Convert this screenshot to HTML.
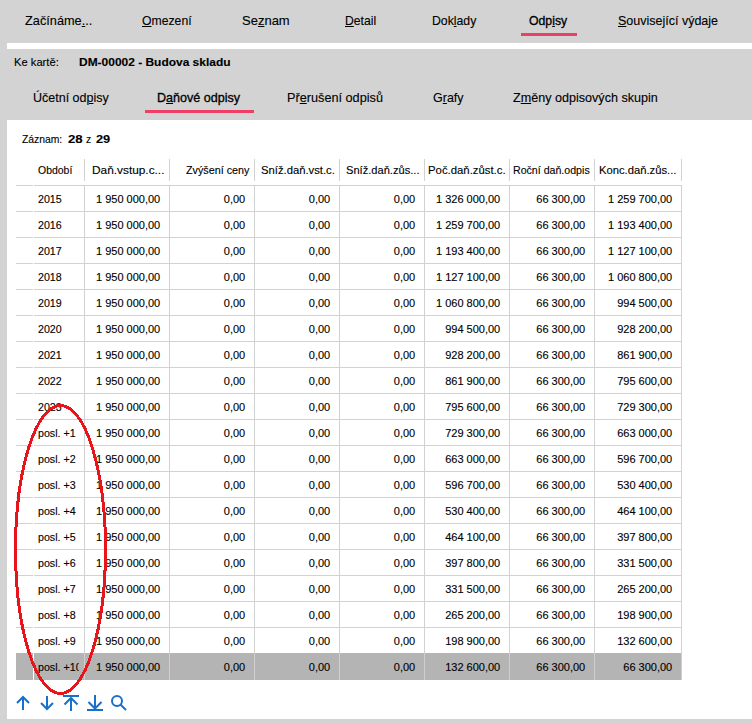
<!DOCTYPE html>
<html><head><meta charset="utf-8"><style>
html,body{margin:0;padding:0;}
body{width:752px;height:724px;position:relative;overflow:hidden;background:#d3d3d3;font-family:"Liberation Sans",sans-serif;color:#000;}
.t{position:absolute;white-space:pre;transform-origin:0 0;-webkit-text-stroke:0.12px #000;}
u{text-decoration:underline;text-decoration-thickness:1px;text-underline-offset:1px;}
#root{position:absolute;left:0;top:0;width:752px;height:724px;}
</style></head><body>
<div style="position:absolute;left:7px;top:43px;width:745px;height:6px;background:#fff"></div>
<div style="position:absolute;left:7px;top:120px;width:745px;height:599px;background:#fff"></div>
<div style="position:absolute;left:521px;top:33px;width:56px;height:3px;background:#f03f66"></div>
<div style="position:absolute;left:145px;top:110px;width:109px;height:3px;background:#f03f66"></div>
<div style="position:absolute;left:84px;top:159px;width:1px;height:22px;background:#d2d2d2"></div>
<div style="position:absolute;left:169px;top:159px;width:1px;height:22px;background:#d2d2d2"></div>
<div style="position:absolute;left:254px;top:159px;width:1px;height:22px;background:#d2d2d2"></div>
<div style="position:absolute;left:339px;top:159px;width:1px;height:22px;background:#d2d2d2"></div>
<div style="position:absolute;left:424px;top:159px;width:1px;height:22px;background:#d2d2d2"></div>
<div style="position:absolute;left:509px;top:159px;width:1px;height:22px;background:#d2d2d2"></div>
<div style="position:absolute;left:594px;top:159px;width:1px;height:22px;background:#d2d2d2"></div>
<div style="position:absolute;left:681px;top:159px;width:1px;height:22px;background:#d2d2d2"></div>
<div style="position:absolute;left:16px;top:185px;width:666px;height:1px;background:#d2d2d2"></div>
<div style="position:absolute;left:16px;top:211px;width:666px;height:1px;background:#d2d2d2"></div>
<div style="position:absolute;left:16px;top:237px;width:666px;height:1px;background:#d2d2d2"></div>
<div style="position:absolute;left:16px;top:263px;width:666px;height:1px;background:#d2d2d2"></div>
<div style="position:absolute;left:16px;top:289px;width:666px;height:1px;background:#d2d2d2"></div>
<div style="position:absolute;left:16px;top:315px;width:666px;height:1px;background:#d2d2d2"></div>
<div style="position:absolute;left:16px;top:341px;width:666px;height:1px;background:#d2d2d2"></div>
<div style="position:absolute;left:16px;top:367px;width:666px;height:1px;background:#d2d2d2"></div>
<div style="position:absolute;left:16px;top:393px;width:666px;height:1px;background:#d2d2d2"></div>
<div style="position:absolute;left:16px;top:419px;width:666px;height:1px;background:#d2d2d2"></div>
<div style="position:absolute;left:16px;top:445px;width:666px;height:1px;background:#d2d2d2"></div>
<div style="position:absolute;left:16px;top:471px;width:666px;height:1px;background:#d2d2d2"></div>
<div style="position:absolute;left:16px;top:497px;width:666px;height:1px;background:#d2d2d2"></div>
<div style="position:absolute;left:16px;top:523px;width:666px;height:1px;background:#d2d2d2"></div>
<div style="position:absolute;left:16px;top:549px;width:666px;height:1px;background:#d2d2d2"></div>
<div style="position:absolute;left:16px;top:575px;width:666px;height:1px;background:#d2d2d2"></div>
<div style="position:absolute;left:16px;top:601px;width:666px;height:1px;background:#d2d2d2"></div>
<div style="position:absolute;left:16px;top:627px;width:666px;height:1px;background:#d2d2d2"></div>
<div style="position:absolute;left:16px;top:653px;width:666px;height:1px;background:#d2d2d2"></div>
<div style="position:absolute;left:16px;top:653px;width:666px;height:27px;background:#b4b4b4"></div>
<div style="position:absolute;left:84px;top:186px;width:1px;height:467px;background:#d2d2d2"></div>
<div style="position:absolute;left:84px;top:653px;width:1px;height:27px;background:#cfcfcf"></div>
<div style="position:absolute;left:169px;top:186px;width:1px;height:467px;background:#d2d2d2"></div>
<div style="position:absolute;left:169px;top:653px;width:1px;height:27px;background:#cfcfcf"></div>
<div style="position:absolute;left:254px;top:186px;width:1px;height:467px;background:#d2d2d2"></div>
<div style="position:absolute;left:254px;top:653px;width:1px;height:27px;background:#cfcfcf"></div>
<div style="position:absolute;left:339px;top:186px;width:1px;height:467px;background:#d2d2d2"></div>
<div style="position:absolute;left:339px;top:653px;width:1px;height:27px;background:#cfcfcf"></div>
<div style="position:absolute;left:424px;top:186px;width:1px;height:467px;background:#d2d2d2"></div>
<div style="position:absolute;left:424px;top:653px;width:1px;height:27px;background:#cfcfcf"></div>
<div style="position:absolute;left:509px;top:186px;width:1px;height:467px;background:#d2d2d2"></div>
<div style="position:absolute;left:509px;top:653px;width:1px;height:27px;background:#cfcfcf"></div>
<div style="position:absolute;left:594px;top:186px;width:1px;height:467px;background:#d2d2d2"></div>
<div style="position:absolute;left:594px;top:653px;width:1px;height:27px;background:#cfcfcf"></div>
<div style="position:absolute;left:681px;top:186px;width:1px;height:467px;background:#d2d2d2"></div>
<div style="position:absolute;left:681px;top:653px;width:1px;height:27px;background:#cfcfcf"></div>
<div style="position:absolute;left:33px;top:185px;width:1px;height:495px;background:#fff"></div>
<div class="t" id="t0" style="left:24.61px;top:14.00px;font-size:13px;line-height:13px;transform:scaleX(0.9806);">Začínáme<u>.</u>..</div>
<div class="t" id="t1" style="left:142.00px;top:14.00px;font-size:13px;line-height:13px;transform:scaleX(0.9396);"><u>O</u>mezení</div>
<div class="t" id="t2" style="left:242.00px;top:14.00px;font-size:13px;line-height:13px;">Se<u>z</u>nam</div>
<div class="t" id="t3" style="left:344.97px;top:14.00px;font-size:13px;line-height:13px;transform:scaleX(0.9364);"><u>D</u>etail</div>
<div class="t" id="t4" style="left:431.64px;top:14.00px;font-size:13px;line-height:13px;transform:scaleX(0.9435);">Dok<u>l</u>ady</div>
<div class="t" id="t5" style="left:529.43px;top:14.00px;font-size:13px;line-height:13px;transform:scaleX(0.9425);-webkit-text-stroke:0.32px #000;">Odp<u>i</u>sy</div>
<div class="t" id="t6" style="left:618.38px;top:14.00px;font-size:13px;line-height:13px;transform:scaleX(0.9615);"><u>S</u>ouvisející výdaje</div>
<div class="t" id="t7" style="left:13.58px;top:56.69px;font-size:11px;line-height:11px;transform:scaleX(1.0167);">Ke kartě:</div>
<div class="t" id="t8" style="left:79.32px;top:56.69px;font-size:11px;line-height:11px;font-weight:bold;transform:scaleX(1.0870);">DM-00002 - Budova skladu</div>
<div class="t" id="t9" style="left:33.04px;top:91.00px;font-size:13px;line-height:13px;transform:scaleX(0.9615);">Účetní od<u>p</u>isy</div>
<div class="t" id="t10" style="left:157.04px;top:91.00px;font-size:13px;line-height:13px;transform:scaleX(0.9647);-webkit-text-stroke:0.32px #000;">D<u>a</u>ňové odpisy</div>
<div class="t" id="t11" style="left:286.61px;top:91.00px;font-size:13px;line-height:13px;transform:scaleX(0.9763);">Př<u>e</u>rušení odpisů</div>
<div class="t" id="t12" style="left:433.04px;top:91.00px;font-size:13px;line-height:13px;transform:scaleX(0.9613);">G<u>r</u>afy</div>
<div class="t" id="t13" style="left:512.60px;top:91.00px;font-size:13px;line-height:13px;transform:scaleX(0.9678);">Z<u>m</u>ěny odpisových skupin</div>
<div class="t" id="t14" style="left:22.00px;top:133.69px;font-size:11px;line-height:11px;transform:scaleX(0.9405);">Záznam:</div>
<div class="t" id="t15" style="left:67.67px;top:133.69px;font-size:11px;line-height:11px;font-weight:bold;transform:scaleX(1.2000);">28</div>
<div class="t" id="t16" style="left:86.41px;top:133.69px;font-size:11px;line-height:11px;transform:scaleX(0.9400);">z</div>
<div class="t" id="t17" style="left:96.25px;top:133.69px;font-size:11px;line-height:11px;font-weight:bold;transform:scaleX(1.1636);">29</div>
<div class="t" id="t18" style="left:37.61px;top:164.69px;font-size:11px;line-height:11px;transform:scaleX(0.9500);">Období</div>
<div class="t" id="t19" style="left:92.32px;top:164.69px;font-size:11px;line-height:11px;transform:scaleX(1.0773);">Daň.vstup.c...</div>
<div class="t" id="t20" style="left:186.01px;top:164.69px;font-size:11px;line-height:11px;transform:scaleX(0.9797);">Zvýšení ceny</div>
<div class="t" id="t21" style="left:260.99px;top:164.69px;font-size:11px;line-height:11px;transform:scaleX(1.0239);">Sníž.daň.vst.c.</div>
<div class="t" id="t22" style="left:346.00px;top:164.69px;font-size:11px;line-height:11px;transform:scaleX(1.0097);">Sníž.daň.zůs...</div>
<div class="t" id="t23" style="left:427.76px;top:164.69px;font-size:11px;line-height:11px;transform:scaleX(1.0315);">Poč.daň.zůst.c.</div>
<div class="t" id="t24" style="left:512.62px;top:164.69px;font-size:11px;line-height:11px;transform:scaleX(0.9646);">Roční daň.odpis</div>
<div class="t" id="t25" style="left:598.78px;top:164.69px;font-size:11px;line-height:11px;transform:scaleX(1.0213);">Konc.daň.zůs...</div>
<div class="t" id="r0c0" style="left:38.20px;top:193.69px;font-size:11px;line-height:11px;transform:scaleX(0.9700);width:41.6px;overflow:hidden;">2015</div>
<div class="t" id="r0c1" style="right:591.80px;top:193.69px;font-size:11px;line-height:11px;transform-origin:100% 0;">1 950 000,00</div>
<div class="t" id="r0c2" style="right:506.80px;top:193.69px;font-size:11px;line-height:11px;transform-origin:100% 0;">0,00</div>
<div class="t" id="r0c3" style="right:421.80px;top:193.69px;font-size:11px;line-height:11px;transform-origin:100% 0;">0,00</div>
<div class="t" id="r0c4" style="right:336.80px;top:193.69px;font-size:11px;line-height:11px;transform-origin:100% 0;">0,00</div>
<div class="t" id="r0c5" style="right:251.80px;top:193.69px;font-size:11px;line-height:11px;transform-origin:100% 0;">1 326 000,00</div>
<div class="t" id="r0c6" style="right:166.80px;top:193.69px;font-size:11px;line-height:11px;transform-origin:100% 0;">66 300,00</div>
<div class="t" id="r0c7" style="right:79.80px;top:193.69px;font-size:11px;line-height:11px;transform-origin:100% 0;">1 259 700,00</div>
<div class="t" id="r1c0" style="left:38.20px;top:219.69px;font-size:11px;line-height:11px;transform:scaleX(0.9700);width:41.6px;overflow:hidden;">2016</div>
<div class="t" id="r1c1" style="right:591.80px;top:219.69px;font-size:11px;line-height:11px;transform-origin:100% 0;">1 950 000,00</div>
<div class="t" id="r1c2" style="right:506.80px;top:219.69px;font-size:11px;line-height:11px;transform-origin:100% 0;">0,00</div>
<div class="t" id="r1c3" style="right:421.80px;top:219.69px;font-size:11px;line-height:11px;transform-origin:100% 0;">0,00</div>
<div class="t" id="r1c4" style="right:336.80px;top:219.69px;font-size:11px;line-height:11px;transform-origin:100% 0;">0,00</div>
<div class="t" id="r1c5" style="right:251.80px;top:219.69px;font-size:11px;line-height:11px;transform-origin:100% 0;">1 259 700,00</div>
<div class="t" id="r1c6" style="right:166.80px;top:219.69px;font-size:11px;line-height:11px;transform-origin:100% 0;">66 300,00</div>
<div class="t" id="r1c7" style="right:79.80px;top:219.69px;font-size:11px;line-height:11px;transform-origin:100% 0;">1 193 400,00</div>
<div class="t" id="r2c0" style="left:38.20px;top:245.69px;font-size:11px;line-height:11px;transform:scaleX(0.9700);width:41.6px;overflow:hidden;">2017</div>
<div class="t" id="r2c1" style="right:591.80px;top:245.69px;font-size:11px;line-height:11px;transform-origin:100% 0;">1 950 000,00</div>
<div class="t" id="r2c2" style="right:506.80px;top:245.69px;font-size:11px;line-height:11px;transform-origin:100% 0;">0,00</div>
<div class="t" id="r2c3" style="right:421.80px;top:245.69px;font-size:11px;line-height:11px;transform-origin:100% 0;">0,00</div>
<div class="t" id="r2c4" style="right:336.80px;top:245.69px;font-size:11px;line-height:11px;transform-origin:100% 0;">0,00</div>
<div class="t" id="r2c5" style="right:251.80px;top:245.69px;font-size:11px;line-height:11px;transform-origin:100% 0;">1 193 400,00</div>
<div class="t" id="r2c6" style="right:166.80px;top:245.69px;font-size:11px;line-height:11px;transform-origin:100% 0;">66 300,00</div>
<div class="t" id="r2c7" style="right:79.80px;top:245.69px;font-size:11px;line-height:11px;transform-origin:100% 0;">1 127 100,00</div>
<div class="t" id="r3c0" style="left:38.20px;top:271.69px;font-size:11px;line-height:11px;transform:scaleX(0.9700);width:41.6px;overflow:hidden;">2018</div>
<div class="t" id="r3c1" style="right:591.80px;top:271.69px;font-size:11px;line-height:11px;transform-origin:100% 0;">1 950 000,00</div>
<div class="t" id="r3c2" style="right:506.80px;top:271.69px;font-size:11px;line-height:11px;transform-origin:100% 0;">0,00</div>
<div class="t" id="r3c3" style="right:421.80px;top:271.69px;font-size:11px;line-height:11px;transform-origin:100% 0;">0,00</div>
<div class="t" id="r3c4" style="right:336.80px;top:271.69px;font-size:11px;line-height:11px;transform-origin:100% 0;">0,00</div>
<div class="t" id="r3c5" style="right:251.80px;top:271.69px;font-size:11px;line-height:11px;transform-origin:100% 0;">1 127 100,00</div>
<div class="t" id="r3c6" style="right:166.80px;top:271.69px;font-size:11px;line-height:11px;transform-origin:100% 0;">66 300,00</div>
<div class="t" id="r3c7" style="right:79.80px;top:271.69px;font-size:11px;line-height:11px;transform-origin:100% 0;">1 060 800,00</div>
<div class="t" id="r4c0" style="left:38.20px;top:297.69px;font-size:11px;line-height:11px;transform:scaleX(0.9700);width:41.6px;overflow:hidden;">2019</div>
<div class="t" id="r4c1" style="right:591.80px;top:297.69px;font-size:11px;line-height:11px;transform-origin:100% 0;">1 950 000,00</div>
<div class="t" id="r4c2" style="right:506.80px;top:297.69px;font-size:11px;line-height:11px;transform-origin:100% 0;">0,00</div>
<div class="t" id="r4c3" style="right:421.80px;top:297.69px;font-size:11px;line-height:11px;transform-origin:100% 0;">0,00</div>
<div class="t" id="r4c4" style="right:336.80px;top:297.69px;font-size:11px;line-height:11px;transform-origin:100% 0;">0,00</div>
<div class="t" id="r4c5" style="right:251.80px;top:297.69px;font-size:11px;line-height:11px;transform-origin:100% 0;">1 060 800,00</div>
<div class="t" id="r4c6" style="right:166.80px;top:297.69px;font-size:11px;line-height:11px;transform-origin:100% 0;">66 300,00</div>
<div class="t" id="r4c7" style="right:79.80px;top:297.69px;font-size:11px;line-height:11px;transform-origin:100% 0;">994 500,00</div>
<div class="t" id="r5c0" style="left:38.20px;top:323.69px;font-size:11px;line-height:11px;transform:scaleX(0.9700);width:41.6px;overflow:hidden;">2020</div>
<div class="t" id="r5c1" style="right:591.80px;top:323.69px;font-size:11px;line-height:11px;transform-origin:100% 0;">1 950 000,00</div>
<div class="t" id="r5c2" style="right:506.80px;top:323.69px;font-size:11px;line-height:11px;transform-origin:100% 0;">0,00</div>
<div class="t" id="r5c3" style="right:421.80px;top:323.69px;font-size:11px;line-height:11px;transform-origin:100% 0;">0,00</div>
<div class="t" id="r5c4" style="right:336.80px;top:323.69px;font-size:11px;line-height:11px;transform-origin:100% 0;">0,00</div>
<div class="t" id="r5c5" style="right:251.80px;top:323.69px;font-size:11px;line-height:11px;transform-origin:100% 0;">994 500,00</div>
<div class="t" id="r5c6" style="right:166.80px;top:323.69px;font-size:11px;line-height:11px;transform-origin:100% 0;">66 300,00</div>
<div class="t" id="r5c7" style="right:79.80px;top:323.69px;font-size:11px;line-height:11px;transform-origin:100% 0;">928 200,00</div>
<div class="t" id="r6c0" style="left:38.20px;top:349.69px;font-size:11px;line-height:11px;transform:scaleX(0.9700);width:41.6px;overflow:hidden;">2021</div>
<div class="t" id="r6c1" style="right:591.80px;top:349.69px;font-size:11px;line-height:11px;transform-origin:100% 0;">1 950 000,00</div>
<div class="t" id="r6c2" style="right:506.80px;top:349.69px;font-size:11px;line-height:11px;transform-origin:100% 0;">0,00</div>
<div class="t" id="r6c3" style="right:421.80px;top:349.69px;font-size:11px;line-height:11px;transform-origin:100% 0;">0,00</div>
<div class="t" id="r6c4" style="right:336.80px;top:349.69px;font-size:11px;line-height:11px;transform-origin:100% 0;">0,00</div>
<div class="t" id="r6c5" style="right:251.80px;top:349.69px;font-size:11px;line-height:11px;transform-origin:100% 0;">928 200,00</div>
<div class="t" id="r6c6" style="right:166.80px;top:349.69px;font-size:11px;line-height:11px;transform-origin:100% 0;">66 300,00</div>
<div class="t" id="r6c7" style="right:79.80px;top:349.69px;font-size:11px;line-height:11px;transform-origin:100% 0;">861 900,00</div>
<div class="t" id="r7c0" style="left:38.20px;top:375.69px;font-size:11px;line-height:11px;transform:scaleX(0.9700);width:41.6px;overflow:hidden;">2022</div>
<div class="t" id="r7c1" style="right:591.80px;top:375.69px;font-size:11px;line-height:11px;transform-origin:100% 0;">1 950 000,00</div>
<div class="t" id="r7c2" style="right:506.80px;top:375.69px;font-size:11px;line-height:11px;transform-origin:100% 0;">0,00</div>
<div class="t" id="r7c3" style="right:421.80px;top:375.69px;font-size:11px;line-height:11px;transform-origin:100% 0;">0,00</div>
<div class="t" id="r7c4" style="right:336.80px;top:375.69px;font-size:11px;line-height:11px;transform-origin:100% 0;">0,00</div>
<div class="t" id="r7c5" style="right:251.80px;top:375.69px;font-size:11px;line-height:11px;transform-origin:100% 0;">861 900,00</div>
<div class="t" id="r7c6" style="right:166.80px;top:375.69px;font-size:11px;line-height:11px;transform-origin:100% 0;">66 300,00</div>
<div class="t" id="r7c7" style="right:79.80px;top:375.69px;font-size:11px;line-height:11px;transform-origin:100% 0;">795 600,00</div>
<div class="t" id="r8c0" style="left:38.20px;top:401.69px;font-size:11px;line-height:11px;transform:scaleX(0.9700);width:41.6px;overflow:hidden;">2023</div>
<div class="t" id="r8c1" style="right:591.80px;top:401.69px;font-size:11px;line-height:11px;transform-origin:100% 0;">1 950 000,00</div>
<div class="t" id="r8c2" style="right:506.80px;top:401.69px;font-size:11px;line-height:11px;transform-origin:100% 0;">0,00</div>
<div class="t" id="r8c3" style="right:421.80px;top:401.69px;font-size:11px;line-height:11px;transform-origin:100% 0;">0,00</div>
<div class="t" id="r8c4" style="right:336.80px;top:401.69px;font-size:11px;line-height:11px;transform-origin:100% 0;">0,00</div>
<div class="t" id="r8c5" style="right:251.80px;top:401.69px;font-size:11px;line-height:11px;transform-origin:100% 0;">795 600,00</div>
<div class="t" id="r8c6" style="right:166.80px;top:401.69px;font-size:11px;line-height:11px;transform-origin:100% 0;">66 300,00</div>
<div class="t" id="r8c7" style="right:79.80px;top:401.69px;font-size:11px;line-height:11px;transform-origin:100% 0;">729 300,00</div>
<div class="t" id="r9c0" style="left:38.20px;top:427.69px;font-size:11px;line-height:11px;transform:scaleX(0.9700);width:41.6px;overflow:hidden;">posl. +1</div>
<div class="t" id="r9c1" style="right:591.80px;top:427.69px;font-size:11px;line-height:11px;transform-origin:100% 0;">1 950 000,00</div>
<div class="t" id="r9c2" style="right:506.80px;top:427.69px;font-size:11px;line-height:11px;transform-origin:100% 0;">0,00</div>
<div class="t" id="r9c3" style="right:421.80px;top:427.69px;font-size:11px;line-height:11px;transform-origin:100% 0;">0,00</div>
<div class="t" id="r9c4" style="right:336.80px;top:427.69px;font-size:11px;line-height:11px;transform-origin:100% 0;">0,00</div>
<div class="t" id="r9c5" style="right:251.80px;top:427.69px;font-size:11px;line-height:11px;transform-origin:100% 0;">729 300,00</div>
<div class="t" id="r9c6" style="right:166.80px;top:427.69px;font-size:11px;line-height:11px;transform-origin:100% 0;">66 300,00</div>
<div class="t" id="r9c7" style="right:79.80px;top:427.69px;font-size:11px;line-height:11px;transform-origin:100% 0;">663 000,00</div>
<div class="t" id="r10c0" style="left:38.20px;top:453.69px;font-size:11px;line-height:11px;transform:scaleX(0.9700);width:41.6px;overflow:hidden;">posl. +2</div>
<div class="t" id="r10c1" style="right:591.80px;top:453.69px;font-size:11px;line-height:11px;transform-origin:100% 0;">1 950 000,00</div>
<div class="t" id="r10c2" style="right:506.80px;top:453.69px;font-size:11px;line-height:11px;transform-origin:100% 0;">0,00</div>
<div class="t" id="r10c3" style="right:421.80px;top:453.69px;font-size:11px;line-height:11px;transform-origin:100% 0;">0,00</div>
<div class="t" id="r10c4" style="right:336.80px;top:453.69px;font-size:11px;line-height:11px;transform-origin:100% 0;">0,00</div>
<div class="t" id="r10c5" style="right:251.80px;top:453.69px;font-size:11px;line-height:11px;transform-origin:100% 0;">663 000,00</div>
<div class="t" id="r10c6" style="right:166.80px;top:453.69px;font-size:11px;line-height:11px;transform-origin:100% 0;">66 300,00</div>
<div class="t" id="r10c7" style="right:79.80px;top:453.69px;font-size:11px;line-height:11px;transform-origin:100% 0;">596 700,00</div>
<div class="t" id="r11c0" style="left:38.20px;top:479.69px;font-size:11px;line-height:11px;transform:scaleX(0.9700);width:41.6px;overflow:hidden;">posl. +3</div>
<div class="t" id="r11c1" style="right:591.80px;top:479.69px;font-size:11px;line-height:11px;transform-origin:100% 0;">1 950 000,00</div>
<div class="t" id="r11c2" style="right:506.80px;top:479.69px;font-size:11px;line-height:11px;transform-origin:100% 0;">0,00</div>
<div class="t" id="r11c3" style="right:421.80px;top:479.69px;font-size:11px;line-height:11px;transform-origin:100% 0;">0,00</div>
<div class="t" id="r11c4" style="right:336.80px;top:479.69px;font-size:11px;line-height:11px;transform-origin:100% 0;">0,00</div>
<div class="t" id="r11c5" style="right:251.80px;top:479.69px;font-size:11px;line-height:11px;transform-origin:100% 0;">596 700,00</div>
<div class="t" id="r11c6" style="right:166.80px;top:479.69px;font-size:11px;line-height:11px;transform-origin:100% 0;">66 300,00</div>
<div class="t" id="r11c7" style="right:79.80px;top:479.69px;font-size:11px;line-height:11px;transform-origin:100% 0;">530 400,00</div>
<div class="t" id="r12c0" style="left:38.20px;top:505.69px;font-size:11px;line-height:11px;transform:scaleX(0.9700);width:41.6px;overflow:hidden;">posl. +4</div>
<div class="t" id="r12c1" style="right:591.80px;top:505.69px;font-size:11px;line-height:11px;transform-origin:100% 0;">1 950 000,00</div>
<div class="t" id="r12c2" style="right:506.80px;top:505.69px;font-size:11px;line-height:11px;transform-origin:100% 0;">0,00</div>
<div class="t" id="r12c3" style="right:421.80px;top:505.69px;font-size:11px;line-height:11px;transform-origin:100% 0;">0,00</div>
<div class="t" id="r12c4" style="right:336.80px;top:505.69px;font-size:11px;line-height:11px;transform-origin:100% 0;">0,00</div>
<div class="t" id="r12c5" style="right:251.80px;top:505.69px;font-size:11px;line-height:11px;transform-origin:100% 0;">530 400,00</div>
<div class="t" id="r12c6" style="right:166.80px;top:505.69px;font-size:11px;line-height:11px;transform-origin:100% 0;">66 300,00</div>
<div class="t" id="r12c7" style="right:79.80px;top:505.69px;font-size:11px;line-height:11px;transform-origin:100% 0;">464 100,00</div>
<div class="t" id="r13c0" style="left:38.20px;top:531.69px;font-size:11px;line-height:11px;transform:scaleX(0.9700);width:41.6px;overflow:hidden;">posl. +5</div>
<div class="t" id="r13c1" style="right:591.80px;top:531.69px;font-size:11px;line-height:11px;transform-origin:100% 0;">1 950 000,00</div>
<div class="t" id="r13c2" style="right:506.80px;top:531.69px;font-size:11px;line-height:11px;transform-origin:100% 0;">0,00</div>
<div class="t" id="r13c3" style="right:421.80px;top:531.69px;font-size:11px;line-height:11px;transform-origin:100% 0;">0,00</div>
<div class="t" id="r13c4" style="right:336.80px;top:531.69px;font-size:11px;line-height:11px;transform-origin:100% 0;">0,00</div>
<div class="t" id="r13c5" style="right:251.80px;top:531.69px;font-size:11px;line-height:11px;transform-origin:100% 0;">464 100,00</div>
<div class="t" id="r13c6" style="right:166.80px;top:531.69px;font-size:11px;line-height:11px;transform-origin:100% 0;">66 300,00</div>
<div class="t" id="r13c7" style="right:79.80px;top:531.69px;font-size:11px;line-height:11px;transform-origin:100% 0;">397 800,00</div>
<div class="t" id="r14c0" style="left:38.20px;top:557.69px;font-size:11px;line-height:11px;transform:scaleX(0.9700);width:41.6px;overflow:hidden;">posl. +6</div>
<div class="t" id="r14c1" style="right:591.80px;top:557.69px;font-size:11px;line-height:11px;transform-origin:100% 0;">1 950 000,00</div>
<div class="t" id="r14c2" style="right:506.80px;top:557.69px;font-size:11px;line-height:11px;transform-origin:100% 0;">0,00</div>
<div class="t" id="r14c3" style="right:421.80px;top:557.69px;font-size:11px;line-height:11px;transform-origin:100% 0;">0,00</div>
<div class="t" id="r14c4" style="right:336.80px;top:557.69px;font-size:11px;line-height:11px;transform-origin:100% 0;">0,00</div>
<div class="t" id="r14c5" style="right:251.80px;top:557.69px;font-size:11px;line-height:11px;transform-origin:100% 0;">397 800,00</div>
<div class="t" id="r14c6" style="right:166.80px;top:557.69px;font-size:11px;line-height:11px;transform-origin:100% 0;">66 300,00</div>
<div class="t" id="r14c7" style="right:79.80px;top:557.69px;font-size:11px;line-height:11px;transform-origin:100% 0;">331 500,00</div>
<div class="t" id="r15c0" style="left:38.20px;top:583.69px;font-size:11px;line-height:11px;transform:scaleX(0.9700);width:41.6px;overflow:hidden;">posl. +7</div>
<div class="t" id="r15c1" style="right:591.80px;top:583.69px;font-size:11px;line-height:11px;transform-origin:100% 0;">1 950 000,00</div>
<div class="t" id="r15c2" style="right:506.80px;top:583.69px;font-size:11px;line-height:11px;transform-origin:100% 0;">0,00</div>
<div class="t" id="r15c3" style="right:421.80px;top:583.69px;font-size:11px;line-height:11px;transform-origin:100% 0;">0,00</div>
<div class="t" id="r15c4" style="right:336.80px;top:583.69px;font-size:11px;line-height:11px;transform-origin:100% 0;">0,00</div>
<div class="t" id="r15c5" style="right:251.80px;top:583.69px;font-size:11px;line-height:11px;transform-origin:100% 0;">331 500,00</div>
<div class="t" id="r15c6" style="right:166.80px;top:583.69px;font-size:11px;line-height:11px;transform-origin:100% 0;">66 300,00</div>
<div class="t" id="r15c7" style="right:79.80px;top:583.69px;font-size:11px;line-height:11px;transform-origin:100% 0;">265 200,00</div>
<div class="t" id="r16c0" style="left:38.20px;top:609.69px;font-size:11px;line-height:11px;transform:scaleX(0.9700);width:41.6px;overflow:hidden;">posl. +8</div>
<div class="t" id="r16c1" style="right:591.80px;top:609.69px;font-size:11px;line-height:11px;transform-origin:100% 0;">1 950 000,00</div>
<div class="t" id="r16c2" style="right:506.80px;top:609.69px;font-size:11px;line-height:11px;transform-origin:100% 0;">0,00</div>
<div class="t" id="r16c3" style="right:421.80px;top:609.69px;font-size:11px;line-height:11px;transform-origin:100% 0;">0,00</div>
<div class="t" id="r16c4" style="right:336.80px;top:609.69px;font-size:11px;line-height:11px;transform-origin:100% 0;">0,00</div>
<div class="t" id="r16c5" style="right:251.80px;top:609.69px;font-size:11px;line-height:11px;transform-origin:100% 0;">265 200,00</div>
<div class="t" id="r16c6" style="right:166.80px;top:609.69px;font-size:11px;line-height:11px;transform-origin:100% 0;">66 300,00</div>
<div class="t" id="r16c7" style="right:79.80px;top:609.69px;font-size:11px;line-height:11px;transform-origin:100% 0;">198 900,00</div>
<div class="t" id="r17c0" style="left:38.20px;top:635.69px;font-size:11px;line-height:11px;transform:scaleX(0.9700);width:41.6px;overflow:hidden;">posl. +9</div>
<div class="t" id="r17c1" style="right:591.80px;top:635.69px;font-size:11px;line-height:11px;transform-origin:100% 0;">1 950 000,00</div>
<div class="t" id="r17c2" style="right:506.80px;top:635.69px;font-size:11px;line-height:11px;transform-origin:100% 0;">0,00</div>
<div class="t" id="r17c3" style="right:421.80px;top:635.69px;font-size:11px;line-height:11px;transform-origin:100% 0;">0,00</div>
<div class="t" id="r17c4" style="right:336.80px;top:635.69px;font-size:11px;line-height:11px;transform-origin:100% 0;">0,00</div>
<div class="t" id="r17c5" style="right:251.80px;top:635.69px;font-size:11px;line-height:11px;transform-origin:100% 0;">198 900,00</div>
<div class="t" id="r17c6" style="right:166.80px;top:635.69px;font-size:11px;line-height:11px;transform-origin:100% 0;">66 300,00</div>
<div class="t" id="r17c7" style="right:79.80px;top:635.69px;font-size:11px;line-height:11px;transform-origin:100% 0;">132 600,00</div>
<div class="t" id="r18c0" style="left:38.20px;top:661.69px;font-size:11px;line-height:11px;transform:scaleX(0.9700);width:41.6px;overflow:hidden;">posl. +10</div>
<div class="t" id="r18c1" style="right:591.80px;top:661.69px;font-size:11px;line-height:11px;transform-origin:100% 0;">1 950 000,00</div>
<div class="t" id="r18c2" style="right:506.80px;top:661.69px;font-size:11px;line-height:11px;transform-origin:100% 0;">0,00</div>
<div class="t" id="r18c3" style="right:421.80px;top:661.69px;font-size:11px;line-height:11px;transform-origin:100% 0;">0,00</div>
<div class="t" id="r18c4" style="right:336.80px;top:661.69px;font-size:11px;line-height:11px;transform-origin:100% 0;">0,00</div>
<div class="t" id="r18c5" style="right:251.80px;top:661.69px;font-size:11px;line-height:11px;transform-origin:100% 0;">132 600,00</div>
<div class="t" id="r18c6" style="right:166.80px;top:661.69px;font-size:11px;line-height:11px;transform-origin:100% 0;">66 300,00</div>
<div class="t" id="r18c7" style="right:79.80px;top:661.69px;font-size:11px;line-height:11px;transform-origin:100% 0;">66 300,00</div>
<svg style="position:absolute;left:0;top:0" width="752" height="724" viewBox="0 0 752 724">
<g fill="none" stroke="#1a6ecc" stroke-width="2" stroke-linecap="butt">
<path d="M23 697V710 M17 703L23 697L29 703"/>
<path d="M47 696V709 M41 703L47 709L53 703"/>
<path d="M63 696H79 M71 698V711 M64.5 704.5L71 698L77.5 704.5"/>
<path d="M95 695V709 M87 710H103 M88.5 702L95 708.5L101.5 702"/>
<circle cx="117" cy="701" r="5"/><path d="M120.5 704.5L126 710"/>
</g>
<ellipse cx="60.5" cy="549.5" rx="45" ry="144" fill="none" stroke="#e8141c" stroke-width="3" shape-rendering="crispEdges"/>
</svg>
</body></html>
